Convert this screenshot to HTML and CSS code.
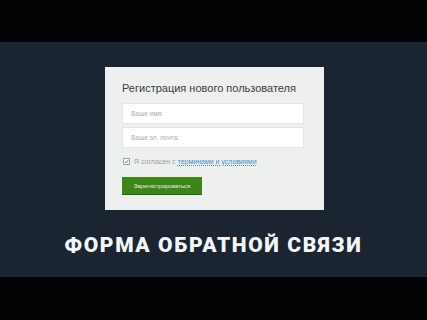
FILE: index.html
```html
<!DOCTYPE html>
<html lang="ru">
    <head>
        <meta charset="UTF-8" />
        <meta name="viewport" content="width=device-width, initial-scale=1.0" />
        <title>Форма обратной связи</title>
        <link rel="stylesheet" href="styles.css">
    </head>
    <body>
        <div class="bar"></div>

        <div class="stage">
            <div class="card">
                <div class="card-title">Регистрация нового пользователя</div>
                <div class="field">Ваше имя:</div>
                <div class="field">Ваше эл. почта:</div>

                <div class="agree">
                    <span class="check">
                        <svg width="7" height="7" viewBox="0 0 7 7">
                            <path d="M1 3.6 L2.8 5.4 L6 1.4" fill="none" stroke="#3a6fa8" stroke-width="1.3" />
                        </svg>
                    </span>
                    <span>Я согласен с <a class="link">терминами и условиями</a></span>
                </div>

                <div class="btn">Зарегистрироваться</div>
            </div>

            <div class="headline">ФОРМА ОБРАТНОЙ СВЯЗИ</div>
        </div>

        <div class="bar bottom"></div>
    </body>
</html>
```

FILE: styles.css
```css
* {
    margin: 0;
    padding: 0;
    box-sizing: border-box;
}

body {
    width: 427px;
    height: 320px;
    background-color: #000;
    font-family: "Liberation Sans", Arial, sans-serif;
    display: flex;
    flex-direction: column;
    overflow: hidden;
}

.bar {
    height: 42px;
    background-color: #020304;
}

.bar.bottom {
    height: 43px;
}

.stage {
    height: 235px;
    background-color: #1b2532;
    display: flex;
    flex-direction: column;
    align-items: center;
    padding-top: 25px;
}

.card {
    width: 219px;
    height: 143px;
    margin-left: 2px;
    background-color: #eeefef;
    padding: 15px 20px 0 17px;
}

.card-title {
    font-size: 11px;
    color: #3a3d40;
    margin-bottom: 9px;
    white-space: nowrap;
}

.field {
    height: 21px;
    background-color: #fff;
    border: 1px solid #e2e4e6;
    font-size: 6.5px;
    color: #a9adb1;
    padding: 0 8px;
    display: flex;
    align-items: center;
    margin-bottom: 3px;
}

.agree {
    display: flex;
    align-items: center;
    gap: 4px;
    font-size: 7px;
    color: #9a9ea3;
    margin-top: 10px;
    padding-left: 1px;
}

.check {
    width: 7px;
    height: 7px;
    background-color: #fff;
    border: 1px solid #8aa4c4;
    display: flex;
    align-items: center;
    justify-content: center;
}

.link {
    color: #3b8fc8;
    text-decoration: underline;
    text-decoration-style: dotted;
}

.btn {
    width: 80px;
    height: 18px;
    margin-top: 12px;
    background-color: #3d8519;
    border-bottom: 1px solid #2c6410;
    color: #e8f2e0;
    font-size: 6px;
    display: flex;
    align-items: center;
    justify-content: center;
}

.headline {
    margin-top: 23px;
    font-family: Roboto, "Liberation Sans", sans-serif;
    font-weight: 900;
    font-size: 21px;
    letter-spacing: 1.6px;
    color: #f4f5f6;
}
```
